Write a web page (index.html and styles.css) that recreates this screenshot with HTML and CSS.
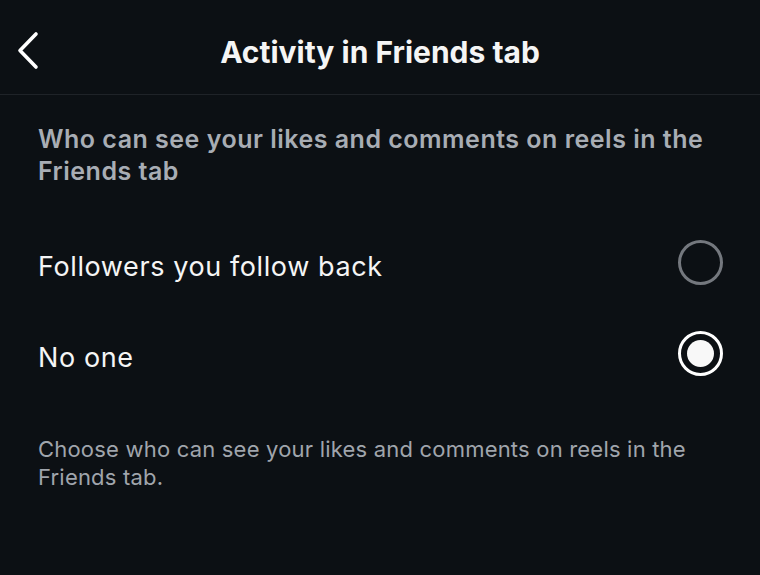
FILE: index.html
```html
<!DOCTYPE html>
<html>
<head>
<meta charset="utf-8">
<link rel="stylesheet" href="styles.css">
</head>
<body>
<div class="screen">
  <header class="topbar">
    <span class="back">
      <svg width="26" height="40" viewBox="0 0 26 40"><path d="M21 3 L5 19.5 L21 36" fill="none" stroke="#fff" stroke-width="3.6" stroke-linecap="round" stroke-linejoin="round"/></svg>
    </span>
    <h1 class="title">Activity in Friends tab</h1>
  </header>
  <main class="content">
    <p class="question">Who can see your likes and comments on reels in the Friends tab</p>
    <div class="options">
      <div class="option">
        <span class="label">Followers you follow back</span>
        <span class="radio"></span>
      </div>
      <div class="option">
        <span class="label">No one</span>
        <span class="radio selected"></span>
      </div>
    </div>
    <p class="note">Choose who can see your likes and comments on reels in the Friends tab.</p>
  </main>
</div>
</body>
</html>
```
FILE: styles.css
```css
* { box-sizing: border-box; }
html, body { margin: 0; padding: 0; }
body {
  background: #0c1014;
  font-family: Inter, "Noto Sans", sans-serif;
  color: #f5f5f5;
  width: 760px;
  height: 575px;
  overflow: hidden;
}
.topbar {
  position: relative;
  height: 95px;
  border-bottom: 1px solid #1f2328;
  display: flex;
  align-items: center;
  justify-content: center;
}
.back {
  position: absolute;
  left: 15px;
  top: 31px;
  display: flex;
}
.title {
  margin: 0;
  font-size: 30px;
  font-weight: 700;
  color: #f5f5f5;
  letter-spacing: 0;
  padding-top: 9px;
}
.content {
  padding: 0 38px;
}
.question {
  margin: 28px 0 0;
  font-size: 25px;
  line-height: 32px;
  font-weight: 600;
  color: #a8adb4;
  letter-spacing: 0.5px;
}
.options {
  margin-top: 30px;
  display: flex;
  flex-direction: column;
}
.option {
  display: flex;
  align-items: center;
  justify-content: space-between;
  height: 91px;
  margin-right: -1px;
}
.label {
  font-size: 27px;
  font-weight: 400;
  color: #f5f5f5;
  letter-spacing: 0.6px;
  padding-top: 7px;
}
.radio {
  width: 45px;
  height: 45px;
  border-radius: 50%;
  border: 3px solid #74787e;
  display: flex;
  align-items: center;
  justify-content: center;
}
.radio.selected {
  border-color: #ffffff;
}
.radio.selected::after {
  content: "";
  width: 27px;
  height: 27px;
  border-radius: 50%;
  background: #f8f8f8;
}
.note {
  margin: 36px 0 0;
  font-size: 22px;
  line-height: 28px;
  color: #a0a5ac;
  letter-spacing: 0.2px;
}
```
